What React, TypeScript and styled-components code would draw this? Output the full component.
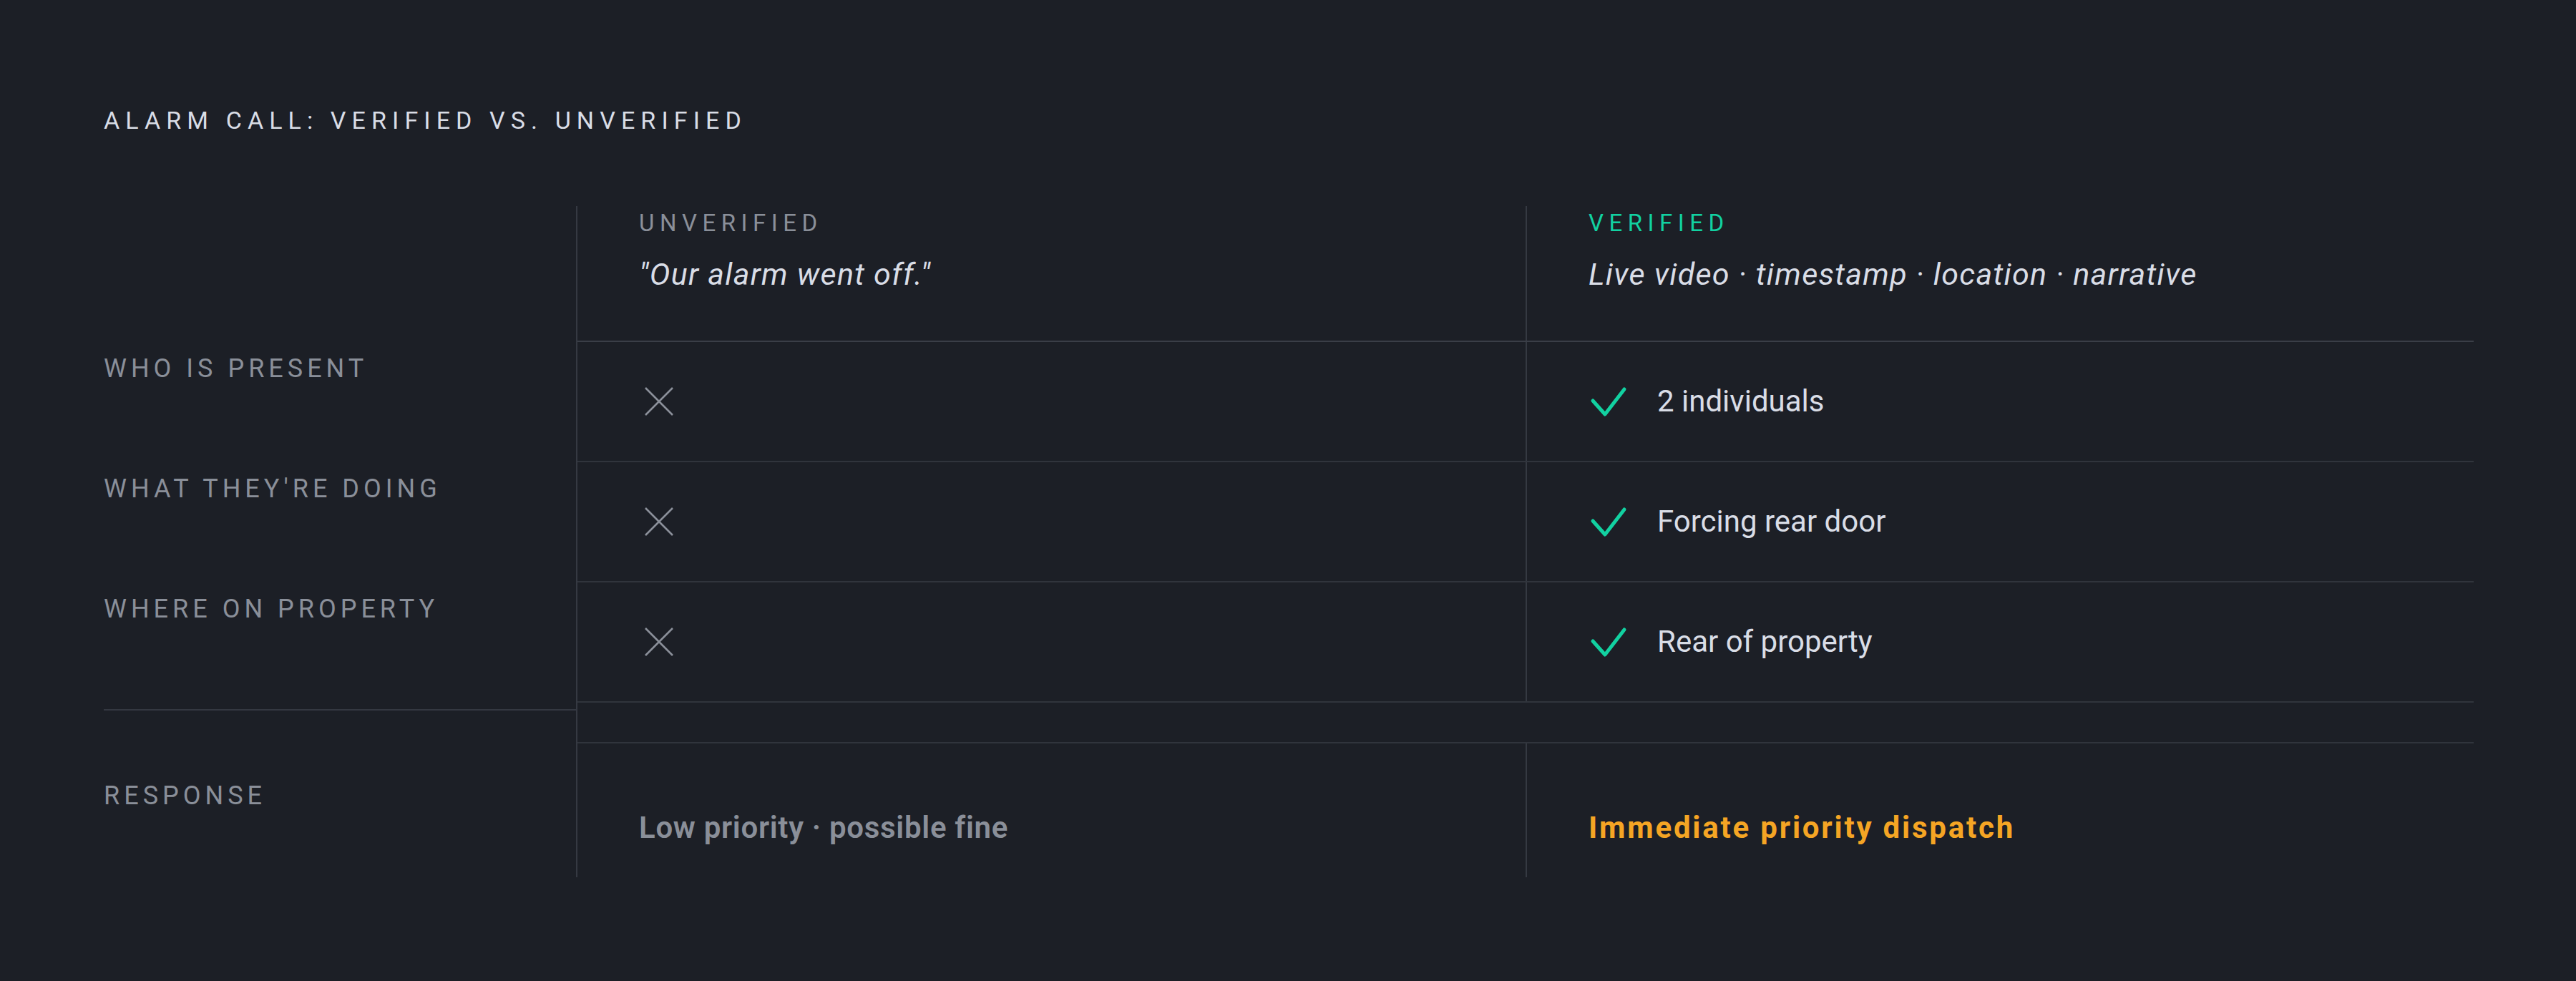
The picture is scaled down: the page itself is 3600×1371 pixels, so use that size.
import styled, {createGlobalStyle} from 'styled-components';

const GlobalStyle = createGlobalStyle`
  html, body {
    margin: 0;
    padding: 0;
    background-color: #1c1f26;
  }
  body {
    font-family: Roboto, 'Liberation Sans', sans-serif;
  }
`;

const Page = styled.div`
  min-height: 100vh;
  box-sizing: border-box;
  padding: 151px 0 0 145px;
  background-color: #1c1f26;
  color: #d9dde6;
`;

const Title = styled.h1`
  margin: 0 0 103px;
  font-size: 34px;
  line-height: 1;
  font-weight: 400;
  letter-spacing: 8.1px;
  color: #d9dde6;
`;

const Body = styled.div`
  display: flex;
`;

const LabelColumn = styled.div`
  display: flex;
  flex-direction: column;
  width: 660px;
  padding-top: 143px;
`;

const RowLabel = styled.div`
  display: flex;
  align-items: center;
  height: 168px;
  font-size: 36px;
  line-height: 1;
  letter-spacing: 6px;
  color: #8a8f99;
`;

const LabelDivider = styled.div`
  margin-top: 56px;
  border-top: 2px solid #343841;
`;

const ResponseLabel = styled.div`
  padding-top: 101px;
  font-size: 36px;
  line-height: 1;
  letter-spacing: 6px;
  color: #8a8f99;
`;

const Table = styled.div`
  display: flex;
  flex-direction: column;
  width: 2650px;
  border-left: 2px solid #353942;
`;

const Row = styled.div<{$height: number; $line?: string}>`
  display: grid;
  grid-template-columns: 1fr 1fr;
  box-sizing: border-box;
  height: ${({$height}) => $height}px;
  border-bottom: 2px solid ${({$line}) => $line || '#30343c'};
`;

const LastRow = styled.div`
  display: grid;
  grid-template-columns: 1fr 1fr;
`;

const Cell = styled.div<{$divided?: boolean}>`
  display: flex;
  align-items: center;
  padding-left: 86px;
  border-left: ${({$divided}) => ($divided ? '2px solid #353942' : 'none')};
`;

const HeaderCell = styled(Cell)`
  flex-direction: column;
  align-items: flex-start;
  padding-top: 7px;
`;

const ColumnTag = styled.div<{$verified?: boolean}>`
  font-size: 33px;
  line-height: 1;
  letter-spacing: 7.5px;
  color: ${({$verified}) => ($verified ? '#12d1a1' : '#8a8f99')};
`;

const Source = styled.div`
  margin-top: 34px;
  font-size: 43px;
  line-height: 1;
  font-style: italic;
  letter-spacing: 1.3px;
  color: #d9dde6;
`;

const IconSlot = styled.div`
  display: flex;
  align-items: center;
  justify-content: center;
  width: 56px;
  margin-right: 40px;
`;

const Finding = styled.span`
  font-size: 42px;
  line-height: 1;
  color: #d9dde6;
`;

const ResponseCell = styled(Cell)`
  align-items: flex-start;
  padding-top: 97px;
  padding-bottom: 48px;
`;

const Outcome = styled.span<{$urgent?: boolean}>`
  font-size: 42px;
  line-height: 1;
  font-weight: ${({$urgent}) => ($urgent ? 700 : 600)};
  letter-spacing: ${({$urgent}) => ($urgent ? 2.8 : 0.7)}px;
  color: ${({$urgent}) => ($urgent ? '#f5a524' : '#8a8f99')};
`;

function CrossIcon() {
  return (
    <svg width="40" height="40" viewBox="0 0 40 40" fill="none">
      <path d="M1 1L39 39M39 1L1 39" stroke="#8a8f99" strokeWidth="2.6" />
    </svg>
  );
}

function CheckIcon() {
  return (
    <svg width="52" height="44" viewBox="0 0 52 44" fill="none">
      <path
        d="M4 21L21 40L48 5"
        stroke="#12d1a1"
        strokeWidth="5"
        strokeLinecap="round"
        strokeLinejoin="round"
      />
    </svg>
  );
}

const findings = [
  {label: 'WHO IS PRESENT', verified: '2 individuals'},
  {label: "WHAT THEY'RE DOING", verified: 'Forcing rear door'},
  {label: 'WHERE ON PROPERTY', verified: 'Rear of property'}
];

function App(): JSX.Element {
  return (
    <Page>
      <GlobalStyle />
      <Title>ALARM CALL: VERIFIED VS. UNVERIFIED</Title>
      <Body>
        <LabelColumn>
          {findings.map(f => (
            <RowLabel key={f.label}>{f.label}</RowLabel>
          ))}
          <LabelDivider />
          <ResponseLabel>RESPONSE</ResponseLabel>
        </LabelColumn>
        <Table>
          <Row $height={190} $line="#3a3e47">
            <HeaderCell>
              <ColumnTag>UNVERIFIED</ColumnTag>
              <Source>"Our alarm went off."</Source>
            </HeaderCell>
            <HeaderCell $divided>
              <ColumnTag $verified>VERIFIED</ColumnTag>
              <Source>Live video · timestamp · location · narrative</Source>
            </HeaderCell>
          </Row>
          {findings.map(f => (
            <Row key={f.label} $height={168}>
              <Cell>
                <IconSlot>
                  <CrossIcon />
                </IconSlot>
              </Cell>
              <Cell $divided>
                <IconSlot>
                  <CheckIcon />
                </IconSlot>
                <Finding>{f.verified}</Finding>
              </Cell>
            </Row>
          ))}
          <Row $height={57} />
          <LastRow>
            <ResponseCell>
              <Outcome>Low priority · possible fine</Outcome>
            </ResponseCell>
            <ResponseCell $divided>
              <Outcome $urgent>Immediate priority dispatch</Outcome>
            </ResponseCell>
          </LastRow>
        </Table>
      </Body>
    </Page>
  );
}

export default App;
